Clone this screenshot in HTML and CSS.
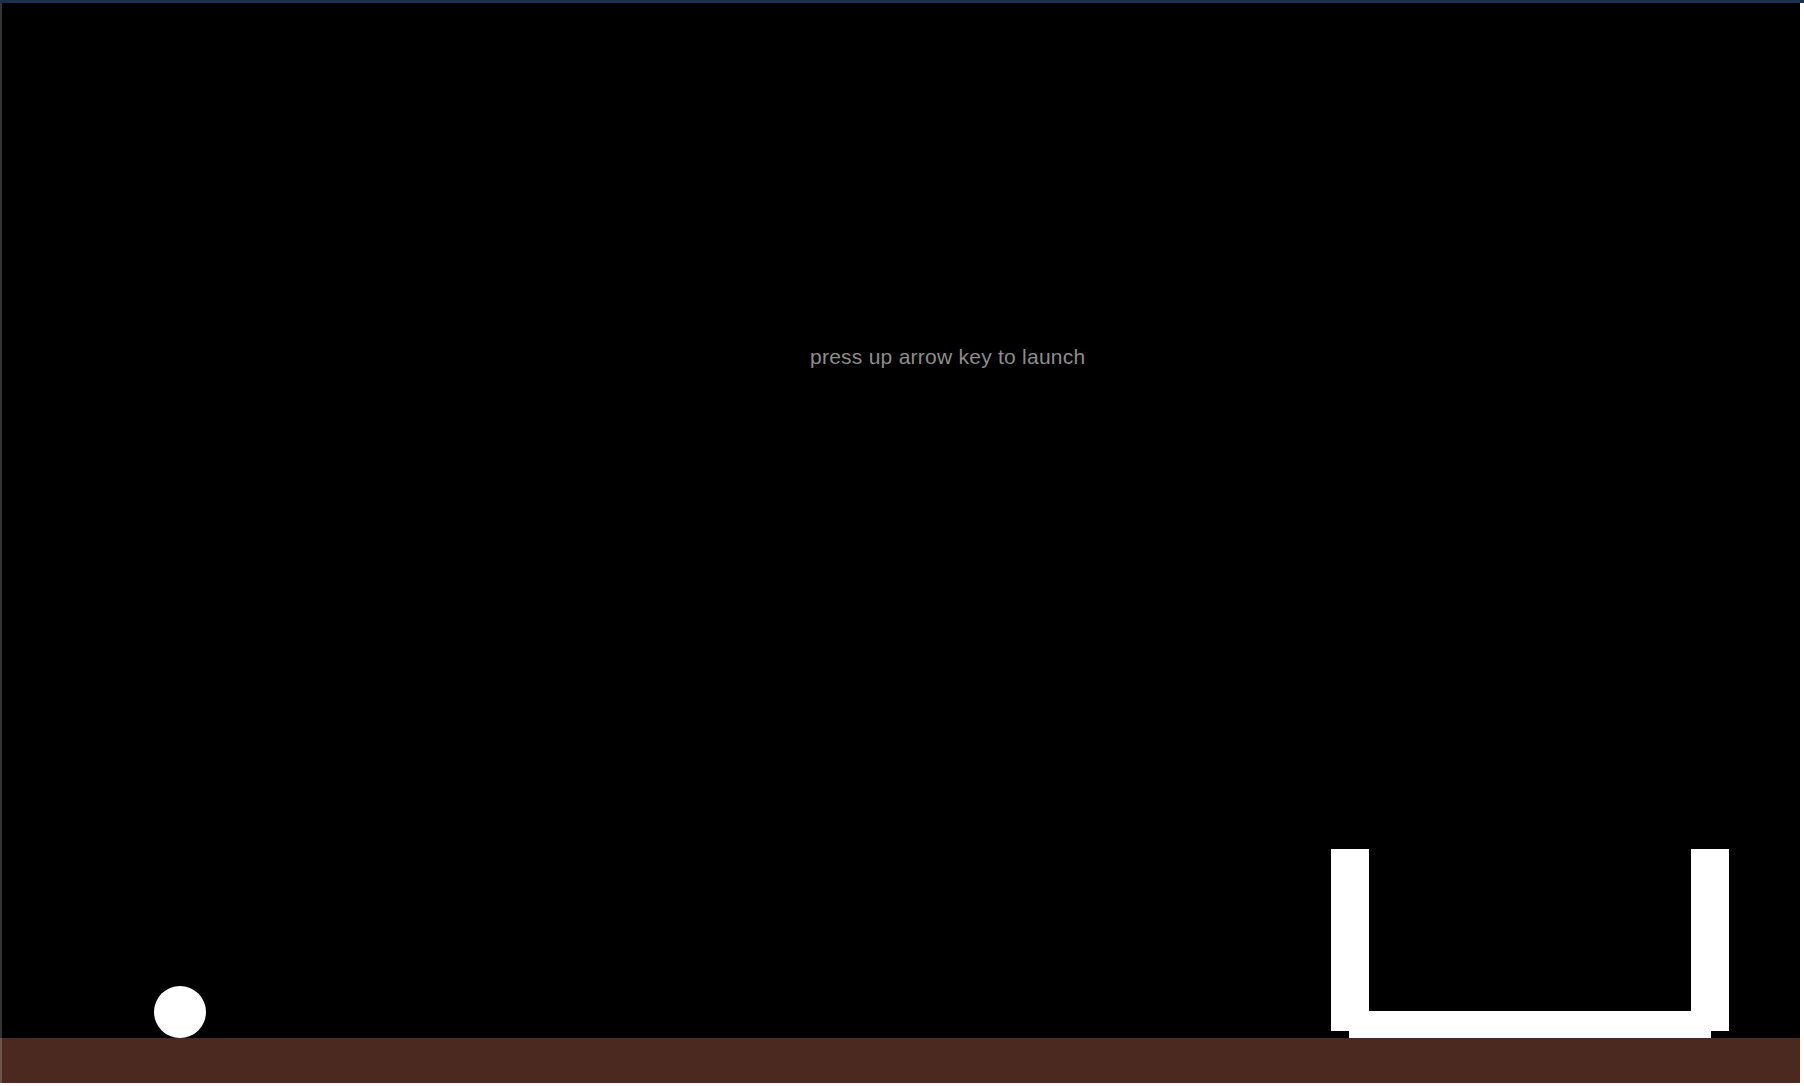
FILE: index.html
```html
<!DOCTYPE html>
<html lang="en">
<head>
<meta charset="utf-8">
<title>Launch</title>
<link rel="stylesheet" href="styles.css">
</head>
<body>
<div class="topbar"></div>
<main class="stage">
  <div class="sky">
    <p class="hint">press up arrow key to launch</p>
    <div class="ball"></div>
    <div class="cup">
      <div class="post"></div>
      <div class="post"></div>
      <div class="cup-base"></div>
    </div>
  </div>
  <div class="ground"></div>
</main>
</body>
</html>
```
FILE: styles.css
```css
html, body {
  margin: 0;
  padding: 0;
}
body {
  background: #ffffff;
  width: 1804px;
  height: 1086px;
  overflow: hidden;
  font-family: "Liberation Sans", Arial, sans-serif;
}
.topbar {
  height: 3px;
  background: #1d3050;
}
.stage {
  position: relative;
  width: 1800px;
  height: 1080px;
  background: #000000;
  display: flex;
  flex-direction: column;
}
.stage::after {
  content: "";
  position: absolute;
  left: 0;
  top: 0;
  bottom: 0;
  width: 2px;
  background: rgba(255, 255, 255, 0.2);
}
.sky {
  position: relative;
  flex: 1;
}
.ground {
  height: 45px;
  background: #4b2921;
}
.hint {
  position: absolute;
  margin: 0;
  left: 810px;
  top: 342px;
  font-size: 21px;
  line-height: 24px;
  letter-spacing: 0.25px;
  color: #8d8d8d;
  white-space: nowrap;
}
.ball {
  position: absolute;
  left: 154px;
  top: 983px;
  width: 52px;
  height: 52px;
  border-radius: 50%;
  background: #ffffff;
}
.cup {
  position: absolute;
  left: 1331px;
  top: 846px;
  width: 398px;
  height: 189px;
  display: flex;
  justify-content: space-between;
  align-items: flex-start;
}
.post {
  width: 38px;
  height: 182px;
  background: #ffffff;
}
.cup-base {
  position: absolute;
  left: 18px;
  bottom: 0;
  width: 362px;
  height: 27px;
  background: #ffffff;
}
```
